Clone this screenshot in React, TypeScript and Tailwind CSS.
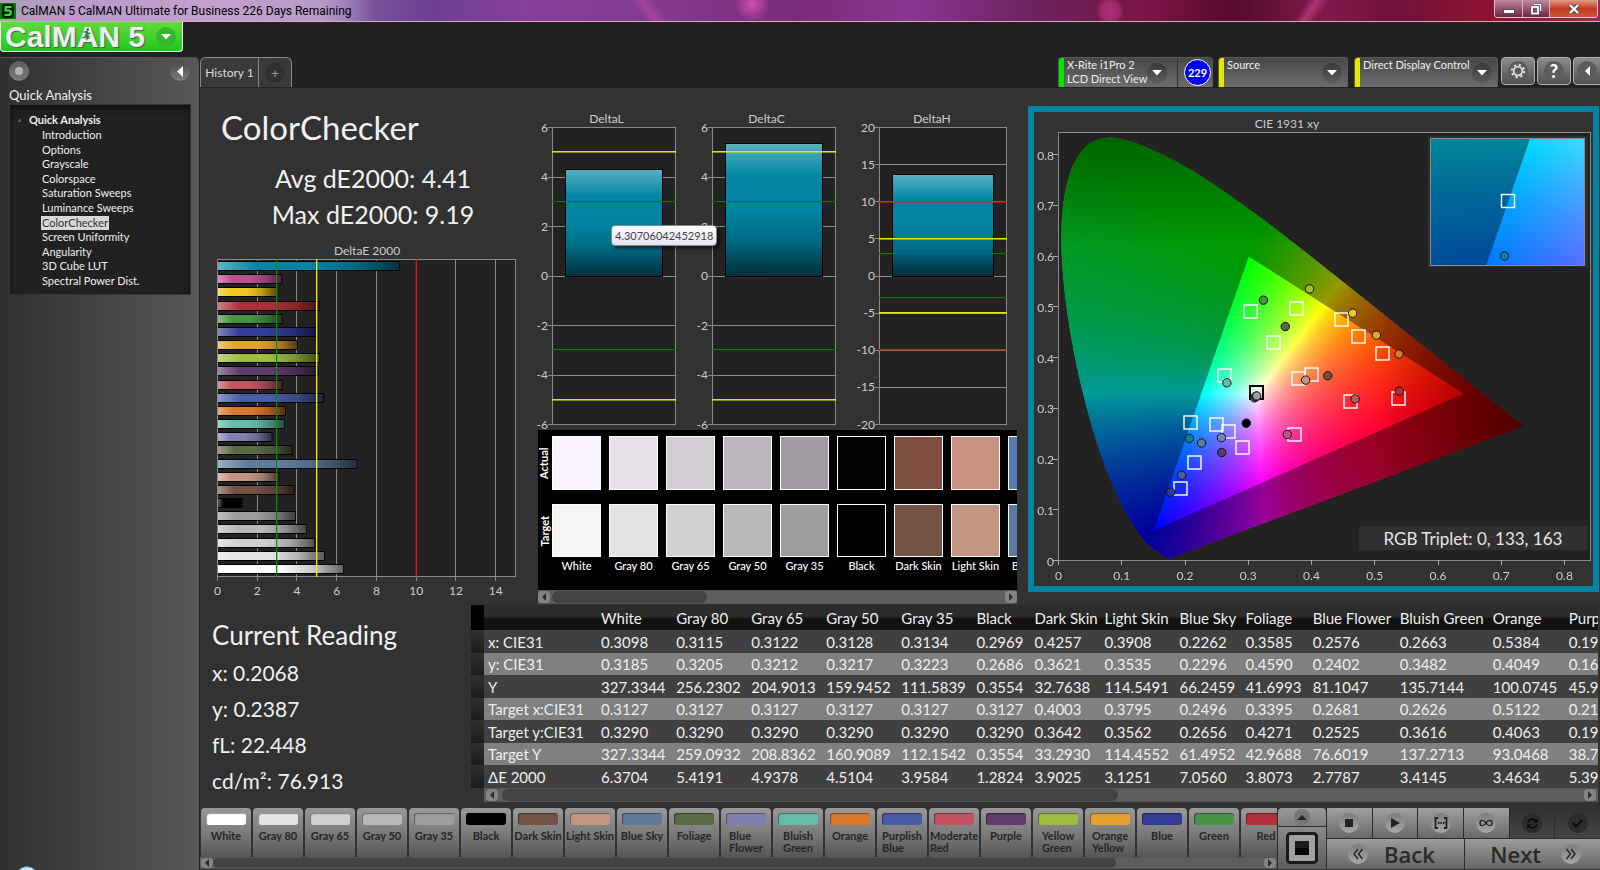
import React, { useEffect, useRef } from "react";
import { FaCheck, FaSyncAlt } from "react-icons/fa";

type Patch = {
  name: string;
  color: string;
  actual: string;
  dE: number;
  target: [number, number];
  measured: [number, number];
};

const PATCHES: Patch[] = [
  { name: "White", color: "#ffffff", actual: "#f8f3ff", dE: 6.37, target: [0.3127, 0.329], measured: [0.3098, 0.3185] },
  { name: "Gray 80", color: "#e4e4e4", actual: "#e7e2e9", dE: 5.42, target: [0.3127, 0.329], measured: [0.3115, 0.3205] },
  { name: "Gray 65", color: "#d0d0d0", actual: "#d2cdd3", dE: 4.94, target: [0.3127, 0.329], measured: [0.3122, 0.3212] },
  { name: "Gray 50", color: "#b9b9b9", actual: "#bcb7bd", dE: 4.51, target: [0.3127, 0.329], measured: [0.3128, 0.3217] },
  { name: "Gray 35", color: "#9d9d9d", actual: "#a09ba1", dE: 3.96, target: [0.3127, 0.329], measured: [0.3134, 0.3223] },
  { name: "Black", color: "#000000", actual: "#030306", dE: 1.28, target: [0.3127, 0.329], measured: [0.2969, 0.2686] },
  { name: "Dark Skin", color: "#735143", actual: "#7d4e3d", dE: 3.9, target: [0.4003, 0.3642], measured: [0.4257, 0.3621] },
  { name: "Light Skin", color: "#c39682", actual: "#c99180", dE: 3.13, target: [0.3795, 0.3562], measured: [0.3908, 0.3535] },
  { name: "Blue Sky", color: "#5e7a9c", actual: "#567bb5", dE: 7.06, target: [0.2496, 0.2656], measured: [0.2262, 0.2296] },
  { name: "Foliage", color: "#596b42", actual: "#596b42", dE: 3.81, target: [0.3395, 0.4271], measured: [0.3585, 0.459] },
  { name: "Blue Flower", color: "#8380b1", actual: "#8380b1", dE: 2.78, target: [0.2681, 0.2525], measured: [0.2576, 0.2402] },
  { name: "Bluish Green", color: "#63bda9", actual: "#63bda9", dE: 3.41, target: [0.2626, 0.3616], measured: [0.2663, 0.3482] },
  { name: "Orange", color: "#d97828", actual: "#d97828", dE: 3.46, target: [0.5122, 0.4063], measured: [0.5384, 0.4049] },
  { name: "Purplish Blue", color: "#4a5ba6", actual: "#4a5ba6", dE: 5.39, target: [0.2157, 0.1918], measured: [0.1948, 0.1661] },
  { name: "Moderate Red", color: "#c45362", actual: "#c45362", dE: 3.3, target: [0.462, 0.312], measured: [0.469, 0.3165] },
  { name: "Purple", color: "#5d3c6c", actual: "#5d3c6c", dE: 5.1, target: [0.2904, 0.2207], measured: [0.258, 0.2108] },
  { name: "Yellow Green", color: "#9ebc40", actual: "#9ebc40", dE: 5.17, target: [0.3757, 0.4946], measured: [0.397, 0.5333] },
  { name: "Orange Yellow", color: "#e6a22e", actual: "#e6a22e", dE: 4.05, target: [0.4742, 0.44], measured: [0.5026, 0.442] },
  { name: "Blue", color: "#323c96", actual: "#323c96", dE: 5.02, target: [0.193, 0.1392], measured: [0.1774, 0.1326] },
  { name: "Green", color: "#479447", actual: "#479447", dE: 3.3, target: [0.3043, 0.4893], measured: [0.324, 0.511] },
  { name: "Red", color: "#b02f39", actual: "#b02f39", dE: 5.17, target: [0.538, 0.3172], measured: [0.539, 0.3317] },
  { name: "Yellow", color: "#ecc820", actual: "#ecc820", dE: 3.02, target: [0.447, 0.4735], measured: [0.465, 0.4853] },
  { name: "Magenta", color: "#bc5292", actual: "#bc5292", dE: 3.28, target: [0.3733, 0.2463], measured: [0.3617, 0.2463] },
  { name: "Cyan", color: "#0085a3", actual: "#0085a3", dE: 9.19, target: [0.2084, 0.27], measured: [0.2068, 0.2387] },
];

const MENU = [
  "Introduction",
  "Options",
  "Grayscale",
  "Colorspace",
  "Saturation Sweeps",
  "Luminance Sweeps",
  "ColorChecker",
  "Screen Uniformity",
  "Angularity",
  "3D Cube LUT",
  "Spectral Power Dist.",
];

const COLUMNS = [
  { name: "White", width: "w-[75px]" },
  { name: "Gray 80", width: "w-[75px]" },
  { name: "Gray 65", width: "w-[75px]" },
  { name: "Gray 50", width: "w-[75px]" },
  { name: "Gray 35", width: "w-[75px]" },
  { name: "Black", width: "w-[58px]" },
  { name: "Dark Skin", width: "w-[70px]" },
  { name: "Light Skin", width: "w-[75px]" },
  { name: "Blue Sky", width: "w-[66px]" },
  { name: "Foliage", width: "w-[67px]" },
  { name: "Blue Flower", width: "w-[87px]" },
  { name: "Bluish Green", width: "w-[93px]" },
  { name: "Orange", width: "w-[76px]" },
  { name: "Purplish Blue", width: "w-[96px]" },
];

const ROWS: [string, string[]][] = [
  ["x: CIE31", ["0.3098", "0.3115", "0.3122", "0.3128", "0.3134", "0.2969", "0.4257", "0.3908", "0.2262", "0.3585", "0.2576", "0.2663", "0.5384", "0.1948"]],
  ["y: CIE31", ["0.3185", "0.3205", "0.3212", "0.3217", "0.3223", "0.2686", "0.3621", "0.3535", "0.2296", "0.4590", "0.2402", "0.3482", "0.4049", "0.1661"]],
  ["Y", ["327.3344", "256.2302", "204.9013", "159.9452", "111.5839", "0.3554", "32.7638", "114.5491", "66.2459", "41.6993", "81.1047", "135.7144", "100.0745", "45.9"]],
  ["Target x:CIE31", ["0.3127", "0.3127", "0.3127", "0.3127", "0.3127", "0.3127", "0.4003", "0.3795", "0.2496", "0.3395", "0.2681", "0.2626", "0.5122", "0.2157"]],
  ["Target y:CIE31", ["0.3290", "0.3290", "0.3290", "0.3290", "0.3290", "0.3290", "0.3642", "0.3562", "0.2656", "0.4271", "0.2525", "0.3616", "0.4063", "0.1918"]],
  ["Target Y", ["327.3344", "259.0932", "208.8362", "160.9089", "112.1542", "0.3554", "33.2930", "114.4552", "61.4952", "42.9688", "76.6019", "137.2713", "93.0468", "38.7"]],
  ["ΔE 2000", ["6.3704", "5.4191", "4.9378", "4.5104", "3.9584", "1.2824", "3.9025", "3.1251", "7.0560", "3.8073", "2.7787", "3.4145", "3.4634", "5.39"]],
];

// CIE 1931 spectral locus, 380nm - 700nm
const LOCUS: [number, number][] = [
  [0.1741, 0.005], [0.1689, 0.0069], [0.1644, 0.0109], [0.1566, 0.0177], [0.144, 0.0297],
  [0.1355, 0.0399], [0.1241, 0.0578], [0.1096, 0.0868], [0.0913, 0.1327], [0.0687, 0.2007],
  [0.0454, 0.295], [0.0235, 0.4127], [0.0082, 0.5384], [0.0039, 0.6548], [0.0139, 0.7502],
  [0.0389, 0.812], [0.0743, 0.8338], [0.1142, 0.8262], [0.1547, 0.8059], [0.1929, 0.7816],
  [0.2296, 0.7543], [0.3016, 0.6923], [0.3731, 0.6245], [0.4441, 0.5547], [0.5125, 0.4866],
  [0.5752, 0.4242], [0.627, 0.3725], [0.6658, 0.334], [0.6915, 0.3083], [0.719, 0.2809],
  [0.7347, 0.2653],
];

const GAMUT: [number, number][] = [
  [0.64, 0.33],
  [0.3, 0.6],
  [0.15, 0.06],
];

// Catmull-Rom through the locus samples so the horseshoe has no corners
function smooth(pts: [number, number][]) {
  const out: [number, number][] = [];
  for (let i = 0; i < pts.length - 1; i++) {
    const p0 = pts[Math.max(0, i - 1)];
    const p1 = pts[i];
    const p2 = pts[i + 1];
    const p3 = pts[Math.min(pts.length - 1, i + 2)];
    for (let s = 0; s < 8; s++) {
      const t = s / 8;
      const at = (k: 0 | 1) =>
        0.5 *
        (2 * p1[k] +
          (p2[k] - p0[k]) * t +
          (2 * p0[k] - 5 * p1[k] + 4 * p2[k] - p3[k]) * t * t +
          (3 * p1[k] - p0[k] - 3 * p2[k] + p3[k]) * t * t * t);
      out.push([at(0), at(1)]);
    }
  }
  out.push(pts[pts.length - 1]);
  return out;
}

function chromaColor(x: number, y: number) {
  const z = 1 - x - y;
  const r = Math.max(0, 3.2406 * x - 1.5372 * y - 0.4986 * z);
  const g = Math.max(0, -0.9689 * x + 1.8758 * y + 0.0415 * z);
  const b = Math.max(0, 0.0557 * x - 0.204 * y + 1.057 * z);
  const max = Math.max(r, g, b, 0.0001);
  // the far red and far green ends fall off in brightness
  let dim = 1;
  if (x > 0.5) dim -= (x - 0.5) * 2.1;
  if (y > 0.62) dim -= (y - 0.62) * 1.6;
  const k = (255 * dim) / max;
  return [r * k, g * k, b * k];
}

function Chromaticity({
  width,
  height,
  x0,
  y0,
  xSpan,
  ySpan,
}: {
  width: number;
  height: number;
  x0: number;
  y0: number;
  xSpan: number;
  ySpan: number;
}) {
  const ref = useRef<HTMLCanvasElement | null>(null);

  useEffect(() => {
    const ctx = ref.current?.getContext("2d");
    if (!ctx) return;

    const fill = document.createElement("canvas");
    fill.width = width;
    fill.height = height;
    const fctx = fill.getContext("2d")!;
    const img = fctx.createImageData(width, height);
    for (let j = 0; j < height; j++) {
      for (let i = 0; i < width; i++) {
        const [r, g, b] = chromaColor(
          x0 + ((i + 0.5) / width) * xSpan,
          y0 + ySpan - ((j + 0.5) / height) * ySpan
        );
        const o = (j * width + i) * 4;
        img.data[o] = r;
        img.data[o + 1] = g;
        img.data[o + 2] = b;
        img.data[o + 3] = 255;
      }
    }
    fctx.putImageData(img, 0, 0);

    const trace = (pts: [number, number][], path: Path2D) => {
      pts.forEach(([x, y], i) => {
        const px = ((x - x0) / xSpan) * width;
        const py = ((y0 + ySpan - y) / ySpan) * height;
        if (i === 0) path.moveTo(px, py);
        else path.lineTo(px, py);
      });
      path.closePath();
    };

    const edge = smooth(LOCUS);
    const locus = new Path2D();
    trace(edge, locus);
    const outside = new Path2D();
    trace(edge, outside);
    trace(GAMUT, outside);

    ctx.clearRect(0, 0, width, height);
    ctx.save();
    ctx.clip(locus);
    ctx.drawImage(fill, 0, 0);
    ctx.fillStyle = "rgba(0,0,0,0.4)";
    ctx.fill(outside, "evenodd");
    ctx.restore();
  }, [width, height, x0, y0, xSpan, ySpan]);

  return <canvas ref={ref} width={width} height={height} className="block h-full w-full" />;
}

function ScrollBar({
  height = "h-[14px]",
  start,
  thumb,
  end,
}: {
  height?: string;
  start: string;
  thumb: string;
  end: string;
}) {
  return (
    <div className={`flex items-center border-y border-[#555] bg-[#5e5e5e] ${height}`}>
      <button aria-label="Scroll left" className={`flex h-full w-3 items-center justify-center rounded-sm bg-[#848484] ${start}`}>
        <svg width="6" height="8" viewBox="0 0 6 8">
          <path d="M5 0 L1 4 L5 8 Z" fill="#2c2c2c" />
        </svg>
      </button>
      <div className={`h-full rounded-md bg-[#434343] ${thumb}`} />
      <button aria-label="Scroll right" className={`ml-auto flex h-full w-3 items-center justify-center rounded-sm bg-[#848484] ${end}`}>
        <svg width="6" height="8" viewBox="0 0 6 8">
          <path d="M1 0 L5 4 L1 8 Z" fill="#2c2c2c" />
        </svg>
      </button>
    </div>
  );
}

function DeltaEChart() {
  const rows = [...PATCHES].reverse();
  const px = (v: number) => 17.5 + v * 19.87;
  return (
    <svg width="330" height="365" viewBox="0 0 330 365" className="block">
      <defs>
        <linearGradient id="shadeH" x1="0" x2="1" y1="0" y2="0">
          <stop offset="0" stopColor="#fff" stopOpacity="0.38" />
          <stop offset="0.22" stopColor="#fff" stopOpacity="0" />
          <stop offset="0.5" stopColor="#000" stopOpacity="0" />
          <stop offset="0.75" stopColor="#000" stopOpacity="0.2" />
          <stop offset="1" stopColor="#000" stopOpacity="0.6" />
        </linearGradient>
      </defs>
      <text x="167" y="15" textAnchor="middle" fontSize="12" fill="#ccc">DeltaE 2000</text>
      <rect x="17.5" y="19.5" width="298" height="317" fill="#222" stroke="#8a8a8a" />
      {[2, 4, 6, 8, 10, 12, 14].map((v) => (
        <rect key={v} x={Math.round(px(v) - 0.5)} y="20" width="1" height="321" fill="#8a8a8a" />
      ))}
      <rect x="17" y="336" width="1" height="5" fill="#8a8a8a" />
      {rows.map((p, i) => {
        const y = Math.round(21 + i * 13.17);
        const w = p.dE * 19.87 - 1;
        return (
          <g key={p.name}>
            <rect x="18" y={y} width={w} height="10" fill="#000" />
            <rect x="18" y={y + 1} width={w - 1} height="8" fill={p.color} />
            <rect x="18" y={y + 1} width={w - 1} height="8" fill="url(#shadeH)" />
          </g>
        );
      })}
      <rect x="76" y="19" width="1" height="318" fill="#0a8a0a" />
      <rect x="77" y="19" width="1" height="318" fill="#0a8a0a" opacity="0.3" />
      <rect x="116" y="19" width="1" height="318" fill="#f2f200" />
      <rect x="117" y="19" width="1" height="318" fill="#f2f200" opacity="0.3" />
      <rect x="216" y="19" width="1" height="318" fill="#f01010" />
      <rect x="215" y="19" width="1" height="318" fill="#f01010" opacity="0.4" />
      {[0, 2, 4, 6, 8, 10, 12, 14].map((v) => (
        <text key={v} x={px(v)} y="355" textAnchor="middle" fontSize="12" fill="#ccc">{v}</text>
      ))}
    </svg>
  );
}

function DeltaChart({
  title,
  value,
  max,
  step,
  left,
  plotWidth,
  width,
  lines,
}: {
  title: string;
  value: number;
  max: number;
  step: number;
  left: number;
  plotWidth: number;
  width: number;
  lines: [number, string][];
}) {
  const py = (v: number) => 27.5 + ((max - v) / (2 * max)) * 297;
  const ticks: number[] = [];
  for (let v = max; v >= -max; v -= step) ticks.push(v);
  const barTop = Math.round(py(value));
  const barHeight = Math.round(py(0)) - barTop;
  const barWidth = Math.round(plotWidth * 0.8);
  const barLeft = left + Math.round((plotWidth - barWidth) / 2);
  return (
    <svg width={width} height="330" viewBox={`0 0 ${width} 330`} className="block shrink-0">
      <defs>
        <linearGradient id={`shade${title}`} x1="0" x2="0" y1="0" y2="1">
          <stop offset="0" stopColor="#fff" stopOpacity="0.35" />
          <stop offset="0.25" stopColor="#fff" stopOpacity="0" />
          <stop offset="0.48" stopColor="#000" stopOpacity="0" />
          <stop offset="0.72" stopColor="#000" stopOpacity="0.18" />
          <stop offset="1" stopColor="#000" stopOpacity="0.65" />
        </linearGradient>
      </defs>
      <text x={(left + plotWidth) / 2 + 4} y="23" textAnchor="middle" fontSize="12" fill="#ccc">{title}</text>
      <rect x={left + 0.5} y="27.5" width={plotWidth} height="297" fill="#222" stroke="#8a8a8a" />
      {ticks.map((v) => (
        <g key={v}>
          <rect x={left - 4} y={Math.round(py(v) - 0.5)} width={plotWidth + 4} height="1" fill="#8a8a8a" />
          <text x={left - 4} y={py(v) + 4} textAnchor="end" fontSize="12" fill="#ccc">{v}</text>
        </g>
      ))}
      <rect x={barLeft} y={barTop} width={barWidth} height={barHeight + 1} fill="#000" />
      <rect x={barLeft + 1} y={barTop + 1} width={barWidth - 2} height={barHeight - 1} fill="#0085a3" />
      <rect x={barLeft + 1} y={barTop + 1} width={barWidth - 2} height={barHeight - 1} fill={`url(#shade${title})`} />
      {lines.map(([v, color]) => (
        <g key={v} fill={color}>
          <rect x={left} y={Math.round(py(v) - 1)} width={plotWidth + 1} height="1" />
          <rect x={left} y={Math.round(py(v))} width={plotWidth + 1} height="1" opacity={Math.abs(v) === 3 ? 0.15 : 0.55} />
        </g>
      ))}
    </svg>
  );
}

const SMALL_LINES: [number, string][] = [
  [5, "#e6e600"],
  [3, "#087a08"],
  [-3, "#087a08"],
  [-5, "#e6e600"],
];

const HUE_LINES: [number, string][] = [
  [10, "#e82020"],
  [5, "#e6e600"],
  [3, "#087a08"],
  [-3, "#087a08"],
  [-5, "#e6e600"],
  [-10, "#f81010"],
];

function CieChart() {
  const px = (x: number) => 24.5 + x * 632.5;
  const py = (y: number) => 448.5 - y * 507.5;
  // markers are anchored one pixel above the axis grid
  const my = (y: number) => py(y) - 1;
  return (
    <svg viewBox="0 0 559 473" className="block w-full">
      <text x="253" y="16" textAnchor="middle" fontSize="12" fill="#ccc">CIE 1931 xy</text>
      <rect x="24.5" y="20.5" width="532" height="428" fill="#222" />
      <foreignObject x="24.5" y="20.5" width="532" height="428">
        <Chromaticity width={532} height={428} x0={0} y0={0} xSpan={0.8411} ySpan={0.8433} />
      </foreignObject>
      <rect x="24.5" y="20.5" width="532" height="428" fill="none" stroke="#8a8a8a" />
      {[0, 0.1, 0.2, 0.3, 0.4, 0.5, 0.6, 0.7, 0.8].map((v) => (
        <g key={v}>
          <rect x={Math.round(px(v) - 0.5)} y="448" width="1" height="5" fill="#aaa" />
          <text x={px(v)} y="468" textAnchor="middle" fontSize="12" fill="#ccc">{v}</text>
          <rect x="19" y={Math.round(py(v) - 0.5)} width="5" height="1" fill="#aaa" />
          <text x="20" y={py(v) + 5} textAnchor="end" fontSize="12" fill="#ccc">{v}</text>
        </g>
      ))}
      {PATCHES.slice(5).map((p) => (
        <rect
          key={p.name}
          x={Math.round(px(p.target[0]) - 6.5)}
          y={Math.round(my(p.target[1]) - 6.5)}
          width="13"
          height="13"
          fill="none"
          stroke={p.name === "Black" ? "#000" : "#fff"}
          strokeWidth={p.name === "Black" ? 2 : 1.4}
        />
      ))}
      {PATCHES.map((p) => (
        <circle
          key={p.name}
          cx={px(p.measured[0])}
          cy={my(p.measured[1])}
          r="4.2"
          fill={p.name === "White" ? "#777" : p.color}
          stroke="#111"
        />
      ))}

      {/* Magnified view of the selected patch */}
      <rect x="394" y="24" width="160" height="131" fill="#2e2e2e" />
      <foreignObject x="396" y="26" width="155" height="127">
        <Chromaticity width={155} height={127} x0={0.1708} y0={0.2335} xSpan={0.0754} ySpan={0.077} />
      </foreignObject>
      <rect x="396.5" y="26.5" width="154" height="127" fill="none" stroke="#8a8a8a" />
      <rect x="467.5" y="82.5" width="13" height="13" fill="none" stroke="#fff" strokeWidth="1.4" />
      <circle cx="470.5" cy="144" r="4.2" fill="#0085a3" stroke="#111" />

      <rect x="325" y="414" width="228" height="24" fill="#303030" />
      <text x="439" y="433" textAnchor="middle" fontSize="17" fill="#e6e6e6">RGB Triplet: 0, 133, 163</text>
    </svg>
  );
}

function RoundArrow({ className }: { className: string }) {
  return (
    <span className={`flex h-5 w-5 items-center justify-center rounded-full ${className}`}>
      <svg width="10" height="6" viewBox="0 0 10 6">
        <path d="M0 0 H10 L5 5.5 Z" fill="#fff" />
      </svg>
    </span>
  );
}

function TitleBar() {
  return (
    <div className="flex h-[22px] items-start border-b border-[#d9a9c2] bg-[radial-gradient(circle_at_1110px_11px,#b0307a_0,#a02a6e_9px,transparent_14px),radial-gradient(circle_at_752px_4px,#d050b0_0,transparent_18px),linear-gradient(55deg,transparent_40%,rgba(200,80,170,0.5)_40.6%,transparent_41.4%),linear-gradient(125deg,transparent_81%,rgba(190,60,130,0.8)_81.6%,transparent_82.4%),linear-gradient(90deg,#a9a0b4_0%,#b79bc9_5%,#c3a0cf_13%,#b89ac9_20%,#a184bb_21.5%,#77509a_23.5%,#6d3f92_27%,#863f9a_33%,#83388c_42%,#7a2c78_50%,#8b3590_57%,#6e2463_64%,#701c4e_68%,#7a1445_72%,#560a2c_77%,#7f1a4a_83%,#701039_87%,#8d1230_93%,#9c2a50_100%)]">
      <svg width="16" height="16" viewBox="0 0 16 16" className="mt-[3px]">
        <rect width="16" height="16" fill="#0a7a12" />
        <rect x="2" y="1" width="12" height="14" rx="3" fill="#021a03" />
        <path d="M11.5 4 H6 L5.5 7.5 H9 Q11 7.8 10.8 9.8 Q10.5 12 8 12 H4.5" fill="none" stroke="#2ce83a" strokeWidth="2.2" />
      </svg>
      <span className="ml-[5px] font-[Roboto,sans-serif] text-xs leading-[22px] text-black">
        CalMAN 5 CalMAN Ultimate for Business 226 Days Remaining
      </span>
      <div className="mr-[2px] ml-auto flex h-[18px] overflow-hidden rounded-b-[4px] border border-t-0 border-[#e6c3d0]">
        <button aria-label="Minimize" className="flex w-7 items-center justify-center border-r border-[#d9b0c0] bg-gradient-to-b from-[#c08aa0] to-[#6b2545]">
          <svg width="12" height="12" viewBox="0 0 12 12">
            <rect x="0.5" y="6.5" width="11" height="4" fill="#fff" stroke="#4a4a5a" />
          </svg>
        </button>
        <button aria-label="Restore" className="flex w-[27px] items-center justify-center border-r border-[#d9b0c0] bg-gradient-to-b from-[#c08aa0] to-[#6b2545]">
          <svg width="12" height="12" viewBox="0 0 12 12">
            <path d="M4 1.5 H10.5 V8" fill="none" stroke="#4a4a5a" strokeWidth="3" />
            <path d="M4 1.5 H10.5 V8" fill="none" stroke="#fff" strokeWidth="1.6" />
            <rect x="2" y="4" width="6" height="6.5" fill="none" stroke="#4a4a5a" strokeWidth="3" />
            <rect x="2" y="4" width="6" height="6.5" fill="none" stroke="#fff" strokeWidth="1.8" />
          </svg>
        </button>
        <button aria-label="Close" className="flex w-[47px] items-center justify-center bg-gradient-to-b from-[#dc9a88] via-[#c4391f] to-[#c85a3a]">
          <svg width="12" height="12" viewBox="0 0 12 12">
            <path d="M2 2 L10 10 M10 2 L2 10" stroke="#4a4a5a" strokeWidth="4" />
            <path d="M2 2 L10 10 M10 2 L2 10" stroke="#fff" strokeWidth="2.4" />
          </svg>
        </button>
      </div>
    </div>
  );
}

function Sidebar() {
  return (
    <aside className="flex w-[200px] shrink-0 flex-col rounded-tr-md border-t border-r border-t-[#555] border-r-[#222] bg-gradient-to-r from-[#303030] to-[#585858] pt-[3px]">
      <div className="flex items-center justify-between px-[9px]">
        <button aria-label="Record" className="flex h-5 w-5 items-center justify-center rounded-full bg-gradient-to-b from-[#5c5c5c] to-[#7c7c7c]">
          <span className="h-2 w-2 rounded-full bg-[#b4b4b4]" />
        </button>
        <button aria-label="Collapse panel" className="flex h-5 w-5 items-center justify-center rounded-full bg-gradient-to-b from-[#4c4c4c] to-[#7c7c7c]">
          <svg width="6" height="11" viewBox="0 0 6 11">
            <path d="M6 0 V11 L0 5.5 Z" fill="#fff" />
          </svg>
        </button>
      </div>
      <h2 className="mt-[5px] px-[9px] text-[13px] leading-[18px] text-[#eee]">Quick Analysis</h2>
      <nav className="mr-2 ml-[9px] h-[191px] border border-[#333] bg-[#212121] pt-[7px] shadow-[inset_0_4px_6px_#111]">
        <div className="flex h-4 items-center gap-2 pl-[7px] text-[11px] font-bold text-[#eee]">
          <svg width="4" height="4" viewBox="0 0 4 4">
            <path d="M4 0 V4 H0 Z" fill="#555" />
          </svg>
          Quick Analysis
        </div>
        <ul className="pl-[31px] text-[11px] leading-[14.6px] text-[#eee]">
          {MENU.map((item) => (
            <li key={item}>
              <a
                href="#"
                className={item === "ColorChecker" ? "inline-block bg-[#d8d8d8] px-px text-[#333]" : "inline-block px-px"}
              >
                {item}
              </a>
            </li>
          ))}
        </ul>
      </nav>
    </aside>
  );
}

function DeviceBar() {
  const panel =
    "flex h-[30px] overflow-hidden rounded-t-[4px] border border-b-0 border-[#5a5a5a] bg-gradient-to-b from-[#484848] to-[#6c6c6c] text-[11px] leading-[14px] text-[#eee]";
  const square =
    "flex h-7 w-[34px] shrink-0 items-center justify-center rounded border border-[#b0b0b0] bg-gradient-to-b from-[#8c8c8c] to-[#505050]";
  const arrow = "bg-gradient-to-b from-[#3a3a3a] to-[#5c5c5c]";
  return (
    <div className="ml-auto flex">
      <div className={`${panel} w-[155px]`}>
        <span className="w-[5px] shrink-0 bg-[#00e800]" />
        <span className="ml-[3px] w-[80px] whitespace-nowrap">X-Rite i1Pro 2<br />LCD Direct View</span>
        <button aria-label="Meter options" className="self-center">
          <RoundArrow className={arrow} />
        </button>
        <span className="ml-[10px] flex flex-1 items-center justify-end border-l border-[#333] pr-px">
          <span className="flex h-[27px] w-[27px] items-center justify-center rounded-full border border-white bg-[#0000f0] text-[11px] font-bold text-white">229</span>
        </span>
      </div>
      <div className={`${panel} ml-[5px] w-[130px]`}>
        <span className="w-[5px] shrink-0 bg-[#e8e800]" />
        <span className="ml-[3px]">Source</span>
        <button aria-label="Source options" className="mr-[5px] ml-auto shrink-0 self-center">
          <RoundArrow className={arrow} />
        </button>
      </div>
      <div className={`${panel} ml-[6px] w-[144px]`}>
        <span className="w-[5px] shrink-0 bg-[#e8e800]" />
        <span className="ml-[3px] whitespace-nowrap">Direct Display Control</span>
        <button aria-label="Display options" className="mr-[5px] ml-auto shrink-0 self-center">
          <RoundArrow className={arrow} />
        </button>
      </div>
      <div className="ml-[3px] flex w-[99px] gap-[2px] overflow-hidden">
        <button aria-label="Settings" className={square}>
          <svg width="20" height="20" viewBox="0 0 20 20">
            <circle cx="10" cy="10" r="10" fill="#5c5c5c" />
            <circle cx="10" cy="10" r="4.3" fill="none" stroke="#ddd" strokeWidth="1.8" />
            <circle cx="10" cy="10" r="6.2" fill="none" stroke="#ddd" strokeWidth="2" strokeDasharray="2.2 2.67" />
          </svg>
        </button>
        <button aria-label="Help" className={square}>
          <span className="flex h-5 w-5 items-center justify-center rounded-full bg-[#5c5c5c] text-lg leading-5 font-black text-white">?</span>
        </button>
        <button aria-label="Collapse" className={square}>
          <span className="mr-[6px] flex h-5 w-5 items-center justify-center rounded-full bg-[#5c5c5c]">
            <svg width="5" height="10" viewBox="0 0 5 10">
              <path d="M5 0 V10 L0 5 Z" fill="#fff" />
            </svg>
          </span>
        </button>
      </div>
    </div>
  );
}

function SwatchPanel() {
  return (
    <div className="ml-[8px] w-[479px]">
      <div className="flex h-40 overflow-hidden bg-black pt-[6px]">
        <div className="flex w-[14px] shrink-0 flex-col gap-[14px]">
          {["Actual", "Target"].map((label) => (
            <div key={label} className="flex h-[54px] items-center justify-center">
              <span className="-rotate-90 text-[11px] font-bold text-white">{label}</span>
            </div>
          ))}
        </div>
        <div className="flex min-w-0 flex-1 gap-2 overflow-hidden">
          {PATCHES.slice(0, 9).map((p) => (
            <div key={p.name} className="flex w-[49px] shrink-0 flex-col">
              <div className="h-[54px] border border-white" style={{ backgroundColor: p.actual }} />
              <div
                className="mt-[14px] h-[53px] border border-white"
                style={{ backgroundColor: p.name === "White" ? "#f5f5f5" : p.color }}
              />
              <span className="-mx-2 mt-px text-center text-[11px] leading-4 font-medium text-white">{p.name}</span>
            </div>
          ))}
        </div>
      </div>
      <ScrollBar start="" thumb="ml-[2px] w-[155px]" end="" />
    </div>
  );
}

function ReadingTable() {
  return (
    <div className="min-w-0 flex-1 pr-[2px]">
      <div className="overflow-hidden">
        <table className="w-[1190px] table-fixed border-collapse text-left text-[15px] text-[#eee]">
          <thead>
            <tr className="h-[25px] bg-gradient-to-b from-[#2c2c2c] from-45% to-[#121212] to-55%">
              <th className="w-[13px] bg-black" />
              <th className="w-[113px]" />
              {COLUMNS.map((c) => (
                <th key={c.name} className={`${c.width} px-1 py-0 leading-[22px] font-normal whitespace-nowrap`}>
                  {c.name}
                </th>
              ))}
            </tr>
          </thead>
          <tbody>
            {ROWS.map(([label, values], i) => (
              <tr key={label} className={i % 2 ? "h-[22px] bg-[#808080]" : "h-[23px] bg-[#404040]"}>
                <td className="bg-gradient-to-b from-[#303030] to-[#1c1c1c] p-0" />
                <th className="px-1 py-0 leading-[22px] font-normal whitespace-nowrap">{label}</th>
                {values.map((v, j) => (
                  <td key={j} className="px-1 py-0 leading-[22px]">{v}</td>
                ))}
              </tr>
            ))}
          </tbody>
        </table>
      </div>
      <div className="ml-[13px]">
        <ScrollBar start="ml-[2px]" thumb="ml-1 w-[616px]" end="mr-[2px]" />
      </div>
    </div>
  );
}

function PatchStrip() {
  return (
    <div className="min-w-0 flex-1">
      <div className="flex h-[49px] gap-[2px] overflow-hidden pl-px">
        {PATCHES.slice(0, 21).map((p) => (
          <button
            key={p.name}
            className="flex w-[50px] shrink-0 flex-col items-center rounded-t bg-gradient-to-b from-[#999] via-[#7c7c7c] to-[#565656] pt-[5px]"
          >
            <span
              className="h-3 w-10 shrink-0 rounded-[3px] shadow-[inset_1px_1px_1px_rgba(0,0,0,0.4)]"
              style={{ backgroundColor: p.color }}
            />
            <span
              className={
                p.name.includes(" ") && p.name.length > 10
                  ? "mt-[5px] w-min text-left text-[11px] leading-3 font-bold text-[#262626]"
                  : "mt-[5px] text-[11px] leading-3 font-bold whitespace-nowrap text-[#262626]"
              }
            >
              {p.name}
            </span>
          </button>
        ))}
      </div>
      <ScrollBar height="h-[12px]" start="ml-px" thumb="w-[903px]" end="mr-px" />
    </div>
  );
}

function Controls() {
  const cell = "flex h-[30px] flex-1 items-center justify-center bg-gradient-to-b from-[#a0a0a0] to-[#686868]";
  const dark = "flex h-[30px] flex-1 items-center justify-center bg-gradient-to-b from-[#303030] to-[#464646]";
  const disc = "flex h-5 w-5 items-center justify-center rounded-full bg-gradient-to-b from-[#7c7c7c] to-[#a8a8a8] text-[#222]";
  const darkDisc = "flex h-5 w-5 items-center justify-center rounded-full bg-[#2c2c2c] text-[11px] text-[#0c0c0c]";
  const wide =
    "flex h-[30px] flex-1 items-center bg-gradient-to-b from-[#9c9c9c] to-[#666] font-['Open_Sans',sans-serif] text-[22px] leading-[30px] font-semibold text-[#2a2a2a]";
  return (
    <div className="flex gap-px bg-[#2c2c2c] pl-px">
      <div className="flex w-12 flex-col gap-px">
        <button aria-label="Expand" className="flex h-[18px] items-center justify-center rounded-t bg-gradient-to-b from-[#999] to-[#808080]">
          <span className="flex h-4 w-4 items-center justify-center rounded-full bg-[#757575]">
            <svg width="10" height="5" viewBox="0 0 10 5">
              <path d="M0 5 H10 L5 0 Z" fill="#222" />
            </svg>
          </span>
        </button>
        <button aria-label="Pattern window" className="flex h-[42px] items-center justify-center bg-gradient-to-b from-[#8a8a8a] to-[#5c5c5c]">
          <svg width="32" height="32" viewBox="0 0 32 32">
            <rect x="1.5" y="1.5" width="29" height="29" rx="3" fill="#a0a0a0" stroke="#1a1a1a" strokeWidth="3" />
            <rect x="9" y="9" width="14" height="14" fill="#050505" />
            <rect x="9" y="9" width="14" height="7" fill="#1c1c1c" />
          </svg>
        </button>
      </div>
      <div className="flex w-[273px] flex-col gap-px">
        <div className="flex gap-px">
          <button aria-label="Stop" className={cell}>
            <span className={disc}><span className="h-2 w-2 bg-[#222]" /></span>
          </button>
          <button aria-label="Play" className={cell}>
            <span className={disc}>
              <svg width="10" height="10" viewBox="0 0 10 10"><path d="M1 0 L10 5 L1 10 Z" fill="#222" /></svg>
            </span>
          </button>
          <button aria-label="Read series" className={cell}>
            <span className={disc}>
              <svg width="14" height="12" viewBox="0 0 14 12">
                <path d="M4 1 H1.5 V11 H4 M10 1 H12.5 V11 H10" fill="none" stroke="#222" strokeWidth="1.8" />
                <path d="M4 6 H10.5" stroke="#222" strokeWidth="2" strokeDasharray="1.5 1" />
              </svg>
            </span>
          </button>
          <button aria-label="Continuous" className={cell}>
            <span className={disc}>
              <svg width="14" height="8" viewBox="0 0 14 8">
                <path d="M7 4 C5 0.5 1 0.5 1 4 C1 7.5 5 7.5 7 4 C9 0.5 13 0.5 13 4 C13 7.5 9 7.5 7 4 Z" fill="none" stroke="#222" strokeWidth="1.4" />
              </svg>
            </span>
          </button>
          <button aria-label="Refresh" className={dark}>
            <span className={darkDisc}><FaSyncAlt /></span>
          </button>
          <button aria-label="Accept" className={dark}>
            <span className={darkDisc}><FaCheck /></span>
          </button>
        </div>
        <div className="flex gap-px">
          <button className={`${wide} pl-[21px]`}>
            <span className={disc}>
              <svg width="12" height="12" viewBox="0 0 12 12">
                <path d="M6 1 L2 6 L6 11 M10.5 1 L6.5 6 L10.5 11" fill="none" stroke="#222" strokeWidth="1.4" />
              </svg>
            </span>
            <span className="ml-4">Back</span>
          </button>
          <button className={`${wide} justify-end pr-[19px]`}>
            <span className="mr-5">Next</span>
            <span className={disc}>
              <svg width="12" height="12" viewBox="0 0 12 12">
                <path d="M1.5 1 L5.5 6 L1.5 11 M6 1 L10 6 L6 11" fill="none" stroke="#222" strokeWidth="1.4" />
              </svg>
            </span>
          </button>
        </div>
      </div>
    </div>
  );
}

function Logo() {
  return (
    <button className="flex h-[30px] w-[183px] items-center rounded-b border border-t-0 border-white bg-gradient-to-b from-[#5fdc3c] to-[#12c81c] pl-1">
      <span className="relative font-['Liberation_Sans',Arial,sans-serif] text-[30px] leading-[26px] font-bold text-[#eee] [text-shadow:1px_1px_1px_#555]">
        CalMAN 5
        {/* runner inside the A */}
        <svg width="11" height="13" viewBox="0 0 12 16" className="absolute top-1 left-[76px]">
          <circle cx="7.5" cy="2" r="1.6" fill="#3a6a36" />
          <path d="M2 5 L6 4.5 L8 7 L11 6 M6 5 L5 9 L8 11 L6 15 M5 9 L3 12 L0 12" fill="none" stroke="#3a6a36" strokeWidth="1.3" />
        </svg>
      </span>
      <RoundArrow className="mr-[6px] ml-auto bg-[#35b72c]" />
    </button>
  );
}

export default function App() {
  return (
    <div className="relative flex min-h-screen flex-col overflow-hidden bg-[#222] font-[Lato,sans-serif] text-[#eee]">
      <TitleBar />

      <div className="h-[35px]">
        <Logo />
      </div>

      <div className="flex flex-1">
        <Sidebar />

        <div className="flex min-w-0 flex-1 flex-col">
          <div className="flex h-[31px] items-start">
            <div className="flex h-[30px] rounded-t-md border border-b-0 border-[#888] bg-[#3a3a3a]">
              <button className="w-[57px] text-xs text-[#ddd]">History 1</button>
              <button aria-label="Add history" className="flex w-[33px] items-center justify-center border-l border-[#888]">
                <span className="flex h-5 w-5 items-center justify-center rounded-full bg-[#303030] text-sm leading-5 text-[#999]">+</span>
              </button>
            </div>
            <DeviceBar />
          </div>

          <main className="flex flex-1 flex-col bg-[#323232]">
            <div className="flex h-[517px]">
              <section className="w-[330px] shrink-0">
                <h1 className="pt-[17px] pl-[21px] text-[33px] leading-[44px] text-[#f0f0f0]">ColorChecker</h1>
                <div className="mt-[11px] pl-4 text-center text-[25px] leading-9 text-[#f0f0f0]">
                  <p>Avg dE2000: 4.41</p>
                  <p>Max dE2000: 9.19</p>
                </div>
                <div className="mt-2">
                  <DeltaEChart />
                </div>
              </section>

              <section className="w-[498px] shrink-0">
                <div className="relative mt-3 flex">
                  <DeltaChart title="DeltaL" value={4.31} max={6} step={2} left={22} plotWidth={123} width={160} lines={SMALL_LINES} />
                  <DeltaChart title="DeltaC" value={5.37} max={6} step={2} left={22} plotWidth={123} width={160} lines={SMALL_LINES} />
                  <DeltaChart title="DeltaH" value={13.7} max={20} step={5} left={29} plotWidth={127} width={170} lines={HUE_LINES} />
                  <div
                    role="tooltip"
                    className="absolute top-[125px] left-[81px] rounded-sm border border-[#888] bg-gradient-to-b from-white to-[#e4e4f0] px-[3px] text-[11px] leading-[19px] text-[#444] shadow-[3px_3px_3px_rgba(0,0,0,0.5)]"
                  >
                    4.30706042452918
                  </div>
                </div>
                <SwatchPanel />
              </section>

              <section className="mt-[18px] mr-px mb-[13px] min-w-0 flex-1 border-[6px] border-[#0085a3] bg-[#323232]">
                <CieChart />
              </section>
            </div>

            <div className="flex">
              <section className="w-[271px] shrink-0 pt-3 pl-3 text-[#f0f0f0]">
                <h2 className="text-[26px] leading-9">Current Reading</h2>
                <div className="mt-[2px] text-[21px] leading-9">
                  <p>x: 0.2068</p>
                  <p>y: 0.2387</p>
                  <p>fL: 22.448</p>
                  <p>cd/m²: 76.913</p>
                </div>
              </section>
              <ReadingTable />
            </div>

            <div className="mt-auto flex pb-px">
              <PatchStrip />
              <Controls />
            </div>
          </main>
        </div>
      </div>

      {/* Desktop start orb peeking over the window edge */}
      <div className="absolute -bottom-5 left-[15px] h-6 w-6 rounded-full border border-[#2a6ca8] bg-[#cfe6f5]" />
    </div>
  );
}
